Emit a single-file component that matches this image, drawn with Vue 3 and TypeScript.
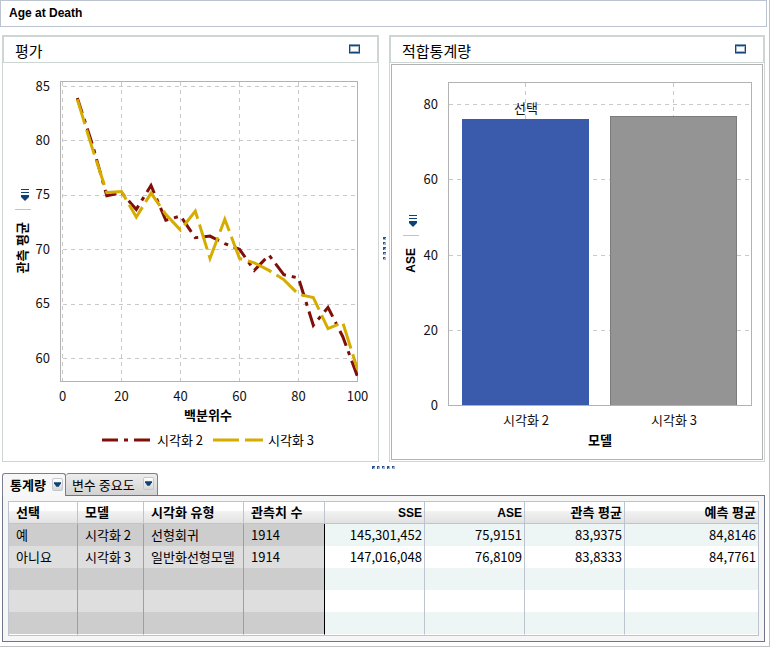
<script setup lang="ts">
import { ref } from 'vue'

interface Series {
  name: string
  color: string
  dash: string
  values: number[]
}

interface Row {
  selected: string
  model: string
  type: string
  count: string
  sse: string
  ase: string
  observed: string
  predicted: string
}

const series: Series[] = [
  {
    name: '시각화 2',
    color: '#7f0f08',
    dash: '16 6 4 6',
    values: [83.94, 79.8, 74.95, 75.25, 73.7, 75.9, 72.7, 73.1, 71.1, 71.25, 70.55, 70.05, 68.1, 69.5, 67.7, 67.4, 63.05, 64.7, 62.0, 58.35],
  },
  {
    name: '시각화 3',
    color: '#d6ac00',
    dash: '26 6',
    values: [83.83, 79.4, 75.25, 75.35, 73.0, 75.2, 73.25, 71.8, 73.55, 69.2, 72.8, 69.2, 68.8, 68.1, 67.25, 65.9, 65.6, 62.75, 63.3, 59.0],
  },
]

const percentileTicks = [0, 20, 40, 60, 80, 100]
const meanTicks = [60, 65, 70, 75, 80, 85]
const lineX = (v: number) => 29.5 + v * 2.95
const lineY = (v: number) => 15.5 + (85 - v) * 10.88
const pointsOf = (s: Series) =>
  s.values.map((v, i) => `${lineX((i + 1) * 5).toFixed(1)},${lineY(v).toFixed(1)}`).join(' ')

const aseTicks = [0, 20, 40, 60, 80]
const barY = (v: number) => Math.round(334 - v * 3.7625)
const bars = [
  { name: '시각화 2', value: 75.9151, x: 41, fill: '#3a5aac', edge: '#3a5aac', label: '선택' },
  { name: '시각화 3', value: 76.8109, x: 189, fill: '#949494', edge: '#7c7c7c', label: '' },
]

const tabs = ['통계량', '변수 중요도']
const activeTab = ref(0)

const headings = ['선택', '모델', '시각화 유형', '관측치 수', 'SSE', 'ASE', '관측 평균', '예측 평균']
const isLatin = (s: string) => /^[A-Z]+$/.test(s)
const rows: Row[] = [
  { selected: '예', model: '시각화 2', type: '선형회귀', count: '1914', sse: '145,301,452', ase: '75,9151', observed: '83,9375', predicted: '84,8146' },
  { selected: '아니요', model: '시각화 3', type: '일반화선형모델', count: '1914', sse: '147,016,048', ase: '76,8109', observed: '83,8333', predicted: '84,7761' },
]
const emptyRows = 3
</script>

<template>
  <main class="page">
    <header class="title-bar"><h1>Age at Death</h1></header>

    <div class="workspace">
      <div class="panels">
        <section class="panel">
          <div class="panel-head">
            <h2>평가</h2>
            <button class="maximize" type="button" aria-label="최대화">
              <svg viewBox="0 0 11 10"><path d="M0 0h11v10H0z" fill="#7d9bb9" /><path d="M0 1h11v8H0z" fill="#154778" /><path d="M1 2h9v6H1z" fill="#9db4cb" /><path d="M2 3h7v4H2z" fill="#fff" /></svg>
            </button>
          </div>
          <div class="chart">
            <div class="chart-body">
              <div class="axis">
                <button class="axis-menu" type="button" aria-label="관측 평균">
                  <svg viewBox="0 0 8 12"><path d="M0 .5h8M0 3.5h8" stroke="#0f4274" /><path d="M0 6h8v2L4 12 0 8z" fill="#0f4274" /></svg>
                </button>
                <span class="axis-title">관측 평균</span>
              </div>
              <svg class="plot" viewBox="0 0 342 334" role="img" aria-label="평가">
                <defs>
                  <clipPath id="line-area"><rect x="27" y="10" width="298" height="301" /></clipPath>
                </defs>
                <g class="grid">
                  <line v-for="t in meanTicks" :key="t" x1="30" x2="324" :y1="Math.floor(lineY(t)) + 0.5" :y2="Math.floor(lineY(t)) + 0.5" />
                  <line v-for="t in percentileTicks.slice(0, 5)" :key="t" y1="11" y2="310" :x1="lineX(t)" :x2="lineX(t)" />
                </g>
                <rect class="frame" x="27.5" y="10.5" width="297" height="300" />
                <g clip-path="url(#line-area)">
                  <polyline v-for="s in series" :key="s.name" class="series" :points="pointsOf(s)" :stroke="s.color" :stroke-dasharray="s.dash" />
                </g>
                <g class="tick end">
                  <text v-for="t in meanTicks" :key="t" x="17" :y="lineY(t) + 4">{{ t }}</text>
                </g>
                <g class="tick middle">
                  <text v-for="t in percentileTicks" :key="t" :x="lineX(t)" y="330">{{ t }}</text>
                </g>
              </svg>
            </div>
            <div class="x-title">백분위수</div>
            <ul class="legend">
              <li v-for="s in series" :key="s.name">
                <svg width="50" height="4"><line x1="0" x2="50" y1="2" y2="2" :stroke="s.color" stroke-width="3" :stroke-dasharray="s.dash" /></svg>
                {{ s.name }}
              </li>
            </ul>
          </div>
        </section>

        <div class="splitter vertical"><i v-for="n in 5" :key="n"></i></div>

        <section class="panel">
          <div class="panel-head">
            <h2>적합통계량</h2>
            <button class="maximize" type="button" aria-label="최대화">
              <svg viewBox="0 0 11 10"><path d="M0 0h11v10H0z" fill="#7d9bb9" /><path d="M0 1h11v8H0z" fill="#154778" /><path d="M1 2h9v6H1z" fill="#9db4cb" /><path d="M2 3h7v4H2z" fill="#fff" /></svg>
            </button>
          </div>
          <div class="chart focused">
            <div class="chart-body">
              <div class="axis">
                <button class="axis-menu" type="button" aria-label="ASE">
                  <svg viewBox="0 0 8 12"><path d="M0 .5h8M0 3.5h8" stroke="#0f4274" /><path d="M0 6h8v2L4 12 0 8z" fill="#0f4274" /></svg>
                </button>
                <span class="axis-title latin">ASE</span>
              </div>
              <svg class="plot" viewBox="0 0 336 358" role="img" aria-label="적합통계량">
                <g class="grid">
                  <line v-for="t in aseTicks.slice(1)" :key="t" x1="28" x2="330" :y1="barY(t) - 0.5" :y2="barY(t) - 0.5" />
                  <line v-for="b in bars" :key="b.name" y1="11" y2="333" :x1="b.x + 63.5" :x2="b.x + 63.5" />
                </g>
                <g v-for="b in bars" :key="b.name">
                  <rect :x="b.x + 0.5" :y="barY(b.value) - 0.5" width="126" :height="334 - barY(b.value)" :fill="b.fill" :stroke="b.edge" />
                  <text class="tick middle" :x="b.x + 64" :y="barY(b.value) - 7">{{ b.label }}</text>
                  <text class="tick middle" :x="b.x + 64" y="353">{{ b.name }}</text>
                </g>
                <rect class="frame" x="27.5" y="10.5" width="303" height="323" />
                <g class="tick end">
                  <text v-for="t in aseTicks" :key="t" x="17" :y="barY(t) + 4">{{ t }}</text>
                </g>
              </svg>
            </div>
            <div class="x-title">모델</div>
          </div>
        </section>
      </div>

      <div class="splitter horizontal"><i v-for="n in 5" :key="n"></i></div>

      <section class="details">
        <div class="tabs">
          <div v-for="(tab, i) in tabs" :key="tab" class="tab" :class="{ active: activeTab === i }">
            <button class="tab-label" type="button" :aria-pressed="activeTab === i" @click="activeTab = i">{{ tab }}</button>
            <button class="tab-menu" type="button" :aria-label="tab">
              <svg viewBox="0 0 6 4"><path d="M0 0h6v1L4 4H2L0 1z" fill="#0f4274" /></svg>
            </button>
          </div>
        </div>
        <div class="tab-body">
          <table>
            <colgroup>
              <col class="c-selected" /><col class="c-model" /><col class="c-type" /><col class="c-count" />
              <col class="c-number" /><col class="c-number" /><col class="c-number" /><col />
            </colgroup>
            <thead>
              <tr><th v-for="h in headings" :key="h" scope="col" :class="{ latin: isLatin(h) }">{{ h }}</th></tr>
            </thead>
            <tbody>
              <tr v-for="r in rows" :key="r.model">
                <td>{{ r.selected }}</td>
                <td>{{ r.model }}</td>
                <td>{{ r.type }}</td>
                <td>{{ r.count }}</td>
                <td>{{ r.sse }}</td>
                <td>{{ r.ase }}</td>
                <td>{{ r.observed }}</td>
                <td>{{ r.predicted }}</td>
              </tr>
              <tr v-for="n in emptyRows" :key="n"><td v-for="h in headings" :key="h"></td></tr>
            </tbody>
          </table>
        </div>
      </section>
    </div>
  </main>
</template>

<style>
body {
  background: #fff;
}
</style>

<style scoped>
* {
  box-sizing: border-box;
}
.page {
  border-right: 1px solid #c0c0c4;
  border-bottom: 1px solid #c0c0c4;
  font: 13px/16px "Noto Sans CJK KR", sans-serif;
  color: #000;
}
h1,
h2,
ul {
  margin: 0;
  padding: 0;
}
button {
  margin: 0;
  padding: 0;
  border: 0;
  background: none;
  font: inherit;
  color: inherit;
}
.title-bar {
  height: 27px;
  margin-right: 2px;
  padding: 0 8px 2px;
  border: 1px solid #bcc4d0;
  display: flex;
  align-items: center;
}
h1 {
  font: bold 12px/16px "Liberation Sans", sans-serif;
}
.workspace {
  padding: 8px 4px 4px 2px;
}
.panels {
  display: grid;
  grid-template-columns: minmax(0, 377fr) 10px minmax(0, 376fr);
}
.panel {
  display: flex;
  flex-direction: column;
  border: 1px solid #cdd6d3;
}
.panel-head {
  height: 27px;
  padding: 2px 17px 0 11px;
  border: 1px solid #cdd6d3;
  display: flex;
  align-items: center;
  justify-content: space-between;
}
h2 {
  font-size: 15px;
  font-weight: 400;
  line-height: 20px;
}
.maximize {
  width: 11px;
  height: 10px;
  margin-bottom: 4px;
  display: flex;
}
.chart {
  flex: 1;
  padding: 8px 3px 13px 12px;
}
.chart.focused {
  margin: 1px;
  padding: 7px 5px 9px 11px;
  border: 1px solid #b2b2b2;
}
.chart-body {
  display: grid;
  grid-template-columns: 16px minmax(0, 1fr);
  column-gap: 2px;
}
.axis {
  display: flex;
  flex-direction: column;
  align-items: center;
  justify-content: center;
  gap: 12px;
  padding-bottom: 14px;
}
.axis-menu {
  width: 16px;
  height: 21px;
  padding-left: 3px;
  border-bottom: 1px solid #bcc4cc;
  display: flex;
  justify-content: center;
}
.axis-menu svg {
  width: 8px;
  height: 12px;
}
.axis-title {
  writing-mode: vertical-rl;
  text-orientation: sideways;
  transform: rotate(180deg);
  font-family: "Liberation Sans", "Noto Sans CJK KR", sans-serif;
  font-weight: 700;
  white-space: nowrap;
}
.latin {
  font-size: 12px;
}
.plot {
  display: block;
  width: 100%;
  height: auto;
}
.grid line {
  stroke: #c9c9c9;
  stroke-dasharray: 4 4;
}
.frame {
  fill: none;
  stroke: #b2b2b2;
}
.series {
  fill: none;
  stroke-width: 3;
}
.tick {
  font-size: 13px;
  fill: #111;
}
.end {
  text-anchor: end;
}
.middle {
  text-anchor: middle;
}
.x-title {
  padding-left: 26px;
  font-weight: 700;
  line-height: 20px;
  text-align: center;
}
.focused .x-title {
  padding-left: 40px;
}
.legend {
  display: flex;
  justify-content: center;
  gap: 10px;
  margin-top: 7px;
  padding-left: 26px;
  list-style: none;
}
.legend li {
  display: flex;
  align-items: center;
  gap: 5px;
}
.splitter {
  display: flex;
  align-items: center;
  justify-content: center;
  gap: 2px;
}
.splitter i {
  width: 3px;
  height: 3px;
  background: linear-gradient(135deg, #2c5288 50%, #9fb4d2 50%);
}
.vertical {
  flex-direction: column;
}
.horizontal {
  height: 11px;
}
.tabs {
  display: flex;
  height: 22px;
}
.tab {
  display: flex;
  align-items: center;
  gap: 8px;
  height: 22px;
  padding: 0 3px 0 6px;
  border: 1px solid #7a8090;
  border-bottom: 0;
  border-radius: 3px 3px 0 0;
  background: linear-gradient(#ededed, #d2d2d2);
}
.tab + .tab {
  border-left: 0;
}
.tab.active {
  gap: 6px;
  height: 23px;
  padding: 0 2px 0 7px;
  background: #f7f7f7;
  font-weight: 700;
  position: relative;
}
.tab-menu {
  width: 11px;
  height: 13px;
  margin-bottom: 2px;
  border: 1px solid #c4c8ce;
  border-radius: 2px;
  background: linear-gradient(#fff, #d6d6d6);
  display: flex;
  align-items: center;
  justify-content: center;
}
.tab-menu svg {
  width: 7px;
  height: 5px;
  flex: none;
}
.tab-body {
  padding: 5px;
  border: 1px solid #6e7588;
  background: #f6f6f6;
}
table {
  width: 100%;
  table-layout: fixed;
  border-collapse: separate;
  border-spacing: 0;
  border: 1px solid #bcc4d0;
  background: #fff;
}
.c-selected {
  width: 69px;
}
.c-model {
  width: 66px;
}
.c-type {
  width: 100px;
}
.c-count {
  width: 81px;
}
.c-number {
  width: 100px;
}
th,
td {
  height: 22px;
  padding: 0 2px 0 7px;
  border-right: 1px solid #bcc4d0;
  line-height: 20px;
  text-align: left;
  white-space: nowrap;
}
th {
  border-bottom: 1px solid #bcc4d0;
  background: linear-gradient(#fff 45%, #f2f2f2 45%, #e2e2e2);
  font-family: "Liberation Sans", "Noto Sans CJK KR", sans-serif;
  font-weight: 700;
}
th:nth-child(n + 5),
td:nth-child(n + 5) {
  text-align: right;
}
th:last-child,
td:last-child {
  border-right: 0;
}
td:nth-child(-n + 3) {
  border-right-color: #98a3a0;
}
td:nth-child(4) {
  border-right-color: #000;
}
tbody tr:nth-child(odd) td {
  background: #edf6f5;
}
tbody tr:nth-child(odd) td:nth-child(-n + 4) {
  background: #cdcdcd;
}
tbody tr:nth-child(even) td:nth-child(-n + 4) {
  background: #dedede;
}
tbody tr:last-child td {
  height: 23px;
  border-bottom: 1px solid #fff;
}
</style>
